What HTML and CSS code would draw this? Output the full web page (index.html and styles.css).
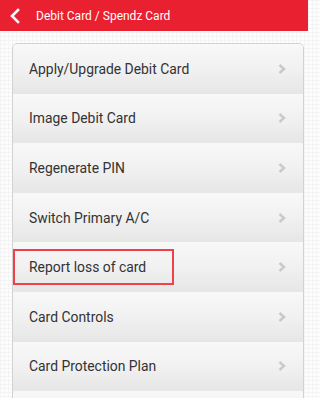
FILE: index.html
```html
<!DOCTYPE html>
<html>
<head>
<meta charset="utf-8">
<link rel="stylesheet" href="styles.css">
</head>
<body>
<header class="topbar">
  <svg class="back" width="12" height="16" viewBox="0 0 12 16"><path d="M9 2 L3 8 L9 14" fill="none" stroke="#fff" stroke-width="2.6" stroke-linecap="square"/></svg>
  <span class="title">Debit Card / Spendz Card</span>
</header>
<main class="content">
  <ul class="menu">
    <li class="item"><span>Apply/Upgrade Debit Card</span><svg class="chev" width="8" height="10" viewBox="0 0 8 10"><path d="M1.5 1 L6 5 L1.5 9" fill="none" stroke="#c9c9c9" stroke-width="2.4"/></svg></li>
    <li class="item"><span>Image Debit Card</span><svg class="chev" width="8" height="10" viewBox="0 0 8 10"><path d="M1.5 1 L6 5 L1.5 9" fill="none" stroke="#c9c9c9" stroke-width="2.4"/></svg></li>
    <li class="item"><span>Regenerate PIN</span><svg class="chev" width="8" height="10" viewBox="0 0 8 10"><path d="M1.5 1 L6 5 L1.5 9" fill="none" stroke="#c9c9c9" stroke-width="2.4"/></svg></li>
    <li class="item"><span>Switch Primary A/C</span><svg class="chev" width="8" height="10" viewBox="0 0 8 10"><path d="M1.5 1 L6 5 L1.5 9" fill="none" stroke="#c9c9c9" stroke-width="2.4"/></svg></li>
    <li class="item"><span class="highlight">Report loss of card</span><svg class="chev" width="8" height="10" viewBox="0 0 8 10"><path d="M1.5 1 L6 5 L1.5 9" fill="none" stroke="#c9c9c9" stroke-width="2.4"/></svg></li>
    <li class="item"><span>Card Controls</span><svg class="chev" width="8" height="10" viewBox="0 0 8 10"><path d="M1.5 1 L6 5 L1.5 9" fill="none" stroke="#c9c9c9" stroke-width="2.4"/></svg></li>
    <li class="item"><span>Card Protection Plan</span><svg class="chev" width="8" height="10" viewBox="0 0 8 10"><path d="M1.5 1 L6 5 L1.5 9" fill="none" stroke="#c9c9c9" stroke-width="2.4"/></svg></li>
    <li class="item"></li>
  </ul>
</main>
</body>
</html>
```
FILE: styles.css
```css
html, body {
  margin: 0;
  padding: 0;
  width: 308px;
  height: 398px;
  overflow: hidden;
}
body {
  font-family: Roboto, "Liberation Sans", sans-serif;
  background-color: #fdfdfd;
  background-image:
    linear-gradient(to right, #f4f4f4 1px, transparent 1px),
    linear-gradient(to bottom, #f4f4f4 1px, transparent 1px);
  background-size: 4px 4px;
}
.topbar {
  height: 31px;
  background: #e8202f;
  display: flex;
  align-items: center;
  padding-left: 9px;
  box-sizing: border-box;
}
.back {
  display: block;
}
.title {
  color: #fff;
  font-size: 12px;
  margin-left: 15px;
}
.content {
  padding: 12px 4px 0 12px;
}
.menu {
  list-style: none;
  margin: 0;
  padding: 0;
  border: 1px solid #d2d2d2;
  border-radius: 5px;
  overflow: hidden;
  background: #f4f4f4;
}
.item {
  height: 49.6px;
  box-sizing: border-box;
  display: flex;
  align-items: center;
  justify-content: space-between;
  padding: 0 17px 0 16px;
  background: linear-gradient(to bottom, #f8f8f8 0%, #f1f1f1 50%, #e6e6e6 100%);
  font-size: 13.9px;
  color: #333;
}
.chev {
  display: block;
}
.highlight {
  display: flex;
  align-items: center;
  box-sizing: border-box;
  width: 161px;
  height: 36px;
  border: 2px solid #f0404a;
  padding-left: 14px;
  margin-left: -16px;
}
```
